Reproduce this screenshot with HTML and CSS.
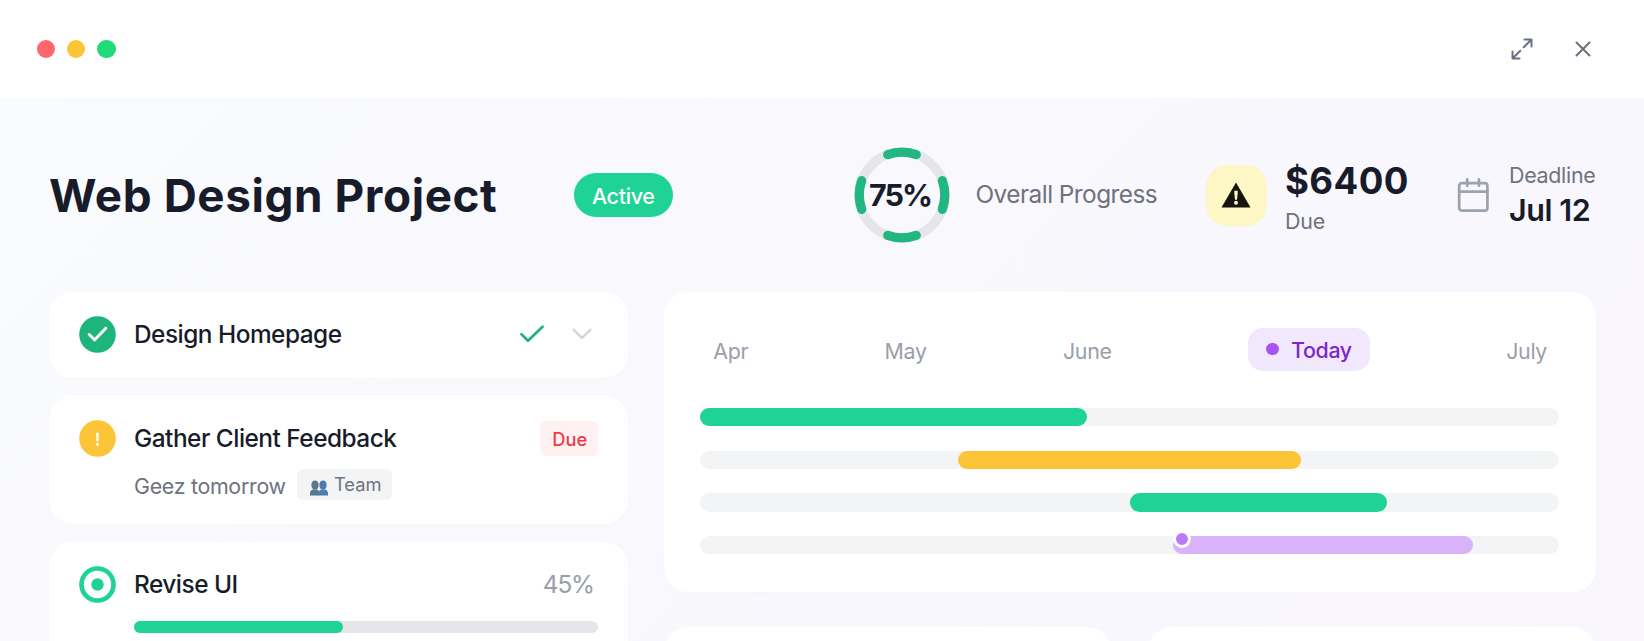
FILE: index.html
```html
<!DOCTYPE html>
<html lang="en">
<head>
<meta charset="utf-8">
<title>Web Design Project</title>
<link rel="stylesheet" href="styles.css">
</head>
<body>
<header class="topbar">
  <div class="lights"><i class="light red"></i><i class="light amber"></i><i class="light green"></i></div>
  <div class="actions">
    <svg class="expand" viewBox="0 0 22 22"><path d="M13.500 1.500H20.500V8.500M20 2L12.700 9.300M8.500 20.500H1.500V13.500M2 20L9.300 12.700"/></svg>
    <svg class="close" viewBox="0 0 16 16"><path d="M1.500 1.500L14.500 14.500M14.500 1.500L1.500 14.500"/></svg>
  </div>
</header>
<main class="main">
  <section class="project">
    <h1 class="title">Web Design Project</h1>
    <span class="status">Active</span>
    <div class="stats">
      <div class="ring">
        <svg viewBox="0 0 96 96">
          <circle class="ring-track" cx="48" cy="48" r="42.800"/>
          <circle class="ring-dash" cx="48" cy="48" r="42.800" pathLength="360" stroke-dasharray="39 51" stroke-dashoffset="19.500"/>
        </svg>
        <span class="ring-value">75%</span>
      </div>
      <span class="overall">Overall Progress</span>
      <div class="warn">
        <svg viewBox="0 0 30 26"><path class="warn-shape" d="M15 0.500L29.500 25.500H0.500Z"/><path class="warn-mark" d="M13.300 8.700h3.400v2.500l-0.700 6.500h-2l-0.700-6.500z"/><circle class="warn-mark" cx="15" cy="20.700" r="2"/></svg>
      </div>
      <div class="money"><strong>$6400</strong><span>Due</span></div>
      <svg class="calendar" viewBox="0 0 24 24"><rect x="2.750" y="4" width="18.500" height="18" rx="1.700"/><path d="M2.750 9.600H21.250M8 1.600V5.800M15.700 1.600V5.800"/></svg>
      <div class="deadline"><span>Deadline</span><strong>Jul 12</strong></div>
    </div>
  </section>
  <section class="board">
    <div class="tasks">
      <article class="card">
        <div class="row">
          <svg class="badge" viewBox="0 0 37 37"><circle class="done" cx="18.500" cy="18.500" r="18.300"/><path class="done-tick" d="M10.200 18.500L15.700 23.800L26.800 12.200"/></svg>
          <h2 class="name">Design Homepage</h2>
          <svg class="tick" viewBox="0 0 24 18"><path d="M1.500 9.300L8 15.800L22.500 1.800"/></svg>
          <svg class="chevron" viewBox="0 0 20 12"><path d="M1.700 1.800L10 10L18.300 1.800"/></svg>
        </div>
      </article>
      <article class="card">
        <div class="row">
          <svg class="badge" viewBox="0 0 37 37"><circle class="pending" cx="18.500" cy="18.500" r="18.300"/><path class="bang" d="M17 12.700h2.800l-0.500 8.800h-1.800z"/><circle class="bang" cx="18.400" cy="24.300" r="1.500"/></svg>
          <h2 class="name">Gather Client Feedback</h2>
          <span class="due">Due</span>
        </div>
        <div class="note">
          <span class="note-text">Geez tomorrow</span>
          <span class="team"><svg viewBox="0 0 18 16"><g class="person-back"><ellipse cx="5" cy="5" rx="3.600" ry="4.500"/><path d="M0 15.500V13c0-2.500 2-3.800 5-3.800s4.500 1.300 4.500 3.800v2.500z"/></g><g class="person-front"><ellipse cx="13" cy="5" rx="3.600" ry="4.500"/><path d="M8.800 15.500V13c0-2.500 1.500-3.800 4.300-3.800s4.900 1.300 4.900 3.800v2.500z"/></g></svg><span>Team</span></span>
        </div>
      </article>
      <article class="card card-progress">
        <div class="row">
          <svg class="badge" viewBox="0 0 37 37"><circle class="target" cx="18.500" cy="18.500" r="16"/><circle class="target-dot" cx="18.500" cy="18.500" r="6.200"/></svg>
          <h2 class="name">Revise UI</h2>
          <span class="percent">45%</span>
        </div>
        <div class="progress"><div class="progress-fill" style="width:45%"></div></div>
      </article>
    </div>
    <div class="side">
      <section class="timeline">
        <div class="months">
          <span>Apr</span><span>May</span><span>June</span>
          <span class="today"><i></i>Today</span>
          <span>July</span>
        </div>
        <div class="lanes">
          <div class="lane"><div class="span-green" style="margin-left:0;width:45%"></div></div>
          <div class="lane"><div class="span-amber" style="margin-left:30%;width:40%"></div></div>
          <div class="lane"><div class="span-green" style="margin-left:50%;width:30%"></div></div>
          <div class="lane"><div class="span-violet" style="margin-left:55%;width:35%"><i class="marker"></i></div></div>
        </div>
      </section>
      <div class="tiles"><div class="tile"></div><div class="tile"></div></div>
    </div>
  </section>
</main>
</body>
</html>
```

FILE: styles.css
```css
* { box-sizing: border-box; }
body {
  margin: 0;
  height: 641px;
  overflow: hidden;
  font-family: Inter, "Liberation Sans", sans-serif;
  color: #181c2a;
  background: #fff;
}
h1, h2 { margin: 0; }
svg { display: block; flex: none; fill: none; stroke-linecap: round; stroke-linejoin: round; }

.topbar {
  height: 98px;
  padding: 0 53px 0 36.500px;
  display: flex;
  align-items: center;
  justify-content: space-between;
}
.lights { display: flex; gap: 12.200px; }
.light { width: 18.300px; height: 18.300px; border-radius: 50%; }
.red { background: #ff666e; }
.amber { background: #fcc537; }
.green { background: #20db79; }
.actions { display: flex; align-items: center; gap: 42px; stroke: #6b7080; stroke-width: 2; }
.expand { width: 22px; height: 22px; }
.close { width: 16px; height: 16px; }

.main {
  height: 543px;
  overflow: hidden;
  padding: 49px 48.500px 0;
  background: linear-gradient(135deg, #fafbfd 0%, #f8f8fd 50%, #faf6fe 100%);
}
.project { height: 96px; display: flex; align-items: center; }
.title {
  width: 525px;
  padding: 1.500px 0 0 0.500px;
  font-size: 45.800px;
  line-height: 56px;
  font-weight: 700;
  letter-spacing: 0.600px;
  white-space: nowrap;
}
.status {
  width: 99.500px;
  height: 43.300px;
  border-radius: 22px;
  background: #1fd295;
  color: #fff;
  font-size: 21.400px;
  line-height: 46px;
  font-weight: 500;
  letter-spacing: -0.300px;
  text-align: center;
}
.stats { margin-left: auto; width: 741.500px; display: flex; align-items: center; color: #6e727e; }
.ring { position: relative; width: 96px; height: 96px; flex: none; }
.ring svg { width: 96px; height: 96px; stroke-width: 9.300; }
.ring-track { stroke: #e5e6ea; }
.ring-dash { stroke: #22b680; }
.ring-value {
  position: absolute;
  inset: 0 0 0 -4px;
  font-size: 30.500px;
  line-height: 96px;
  font-weight: 700;
  letter-spacing: -2px;
  text-align: center;
  color: #181c2a;
}
.overall { flex: none; width: 231px; padding: 0 0 2px 25.500px; font-size: 24.400px; line-height: 36px; letter-spacing: -0.540px; white-space: nowrap; }
.warn {
  flex: none;
  margin-left: 24.500px;
  width: 61px;
  height: 61px;
  border-radius: 21px;
  background: #fdf7c5;
  display: flex;
  align-items: center;
  justify-content: center;
}
.warn svg { width: 30px; height: 26px; }
.warn-shape { fill: #15140f; }
.warn-mark { fill: #fdf7c5; }
.money { flex: none; width: 188px; padding: 3px 0 0 18.500px; display: flex; flex-direction: column; }
.money strong { font-size: 36.600px; line-height: 48.600px; font-weight: 700; letter-spacing: 0.400px; color: #181c2a; }
.money span, .deadline span { font-size: 21.400px; line-height: 30.500px; }
.money span { letter-spacing: -0.200px; }
.calendar { width: 36.600px; height: 36.600px; stroke: #9ca3af; stroke-width: 1.800; }
.deadline { padding-left: 18px; display: flex; flex-direction: column; white-space: nowrap; }
.deadline span { letter-spacing: -0.300px; }
.deadline strong { font-size: 30.500px; line-height: 40.500px; font-weight: 600; letter-spacing: -0.450px; color: #181c2a; }

.board { margin-top: 48.900px; display: flex; gap: 35.500px; }
.tasks { width: 579.800px; display: flex; flex-direction: column; gap: 17.800px; }
.card { border-radius: 24px; background: #fff; padding: 24px 30.500px; height: 86.400px; box-shadow: 0 1px 3px rgba(90, 90, 140, 0.020); }
.card + .card { height: 128px; }
.row { height: 37px; display: flex; align-items: center; }
.badge { width: 37px; height: 37px; margin-right: 18px; }
.done { fill: #1eb57c; }
.done-tick { stroke: #fff; stroke-width: 3; }
.pending { fill: #fcc537; }
.bang { fill: #fff; }
.target { stroke: #1fd295; stroke-width: 4.600; }
.target-dot { fill: #1fd295; }
.name { flex: 1; padding-bottom: 1.500px; font-size: 24.400px; line-height: 36px; font-weight: 500; letter-spacing: -0.500px; white-space: nowrap; }
.tick { width: 24px; height: 18px; margin-right: 27.500px; stroke: #1eb57c; stroke-width: 2.700; }
.chevron { width: 20px; height: 12px; margin-right: 6px; stroke: #d3d4d8; stroke-width: 2.400; }
.due {
  width: 58px;
  height: 35.500px;
  border-radius: 6px;
  background: #fef1f2;
  color: #f03a44;
  font-size: 18.300px;
  line-height: 36px;
  font-weight: 500;
  padding-left: 2px;
  text-align: center;
}
.note { margin: 11.500px 0 0 55px; height: 31px; display: flex; gap: 12px; color: #6e727e; white-space: nowrap; }
.note-text { width: 151px; font-size: 21.400px; line-height: 35px; letter-spacing: -0.300px; }
.team { width: 95px; height: 31px; padding-left: 13px; border-radius: 6px; background: #f2f4f6; display: flex; align-items: center; gap: 6px; font-size: 18.300px; line-height: 30px; }
.team svg { width: 18px; height: 16px; margin-top: 7px; }
.person-back { fill: #58788f; }
.person-front { fill: #4a7db0; }
.percent { margin-right: 4px; padding-bottom: 1px; font-size: 24.400px; letter-spacing: -1.200px; color: #9a9ea9; }
.progress { margin: 18px 0 0 55px; height: 12.300px; border-radius: 7px; background: #e5e6e9; }
.progress-fill { height: 100%; border-radius: 7px; background: #1fd295; }

.side { flex: 1; display: flex; flex-direction: column; gap: 35.400px; }
.timeline { height: 299.700px; border-radius: 24px; background: #fff; padding: 36.500px; box-shadow: 0 1px 3px rgba(90, 90, 140, 0.020); }
.months { height: 43px; padding: 0 12px 0 13px; display: flex; align-items: center; justify-content: space-between; font-size: 21.400px; line-height: 43px; letter-spacing: -0.350px; color: #9a9ea9; }
.months > span { padding-top: 3px; }
.months > .today { height: 43px; padding: 0 18px; border-radius: 15px; background: #f1e8fd; color: #7e27c8; font-weight: 500; display: flex; align-items: center; line-height: 46px; }
.today i { width: 12.500px; height: 12.500px; margin: 0 12.500px 2px 0; border-radius: 50%; background: #a854f4; }
.lanes { margin-top: 36.500px; display: flex; flex-direction: column; gap: 24.400px; }
.lane { height: 18.300px; border-radius: 10px; background: #f3f4f5; }
.lane > div { height: 100%; border-radius: 10px; }
.span-green { background: #1fd295; }
.span-amber { background: #fcc537; }
.span-violet { background: #d9b2fa; position: relative; }
.marker { position: absolute; left: 0; top: -6px; width: 18.300px; height: 18.300px; border-radius: 50%; border: 3px solid #fff; background: #bb7af7; }
.tiles { display: flex; gap: 36.500px; }
.tile { flex: 1; height: 120px; border-radius: 24px; background: #fff; }
```
